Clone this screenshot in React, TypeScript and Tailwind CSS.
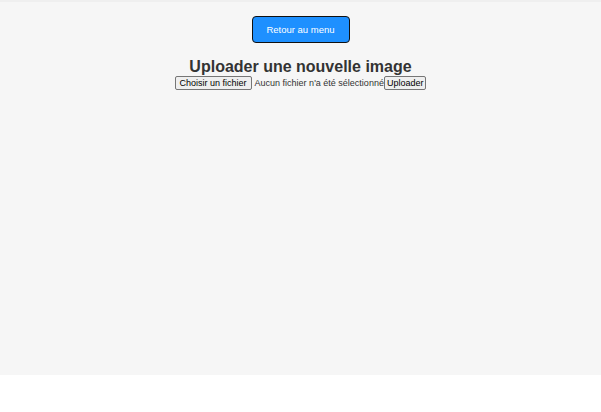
export default function App() {
  return (
    <div className="font-['Liberation_Sans',Arial,sans-serif]">
      <div className="h-[375px] bg-[#f6f6f6] border-t-2 border-[#efefef] flex flex-col items-center">
        <button className="mt-[14px] w-[98px] h-[27px] bg-[#1e90ff] border border-[#111] rounded-[4px] text-white text-[9.5px] leading-none">
          Retour au menu
        </button>
        <h2 className="mt-[15px] text-[16px] leading-[18px] font-bold text-[#333]">
          Uploader une nouvelle image
        </h2>
        <div className="flex items-center text-[9px] leading-none text-[#333]">
          <span className="h-[14px] px-[4px] flex items-center bg-[#efefef] border border-[#767676] rounded-[2px] text-black">
            Choisir un fichier
          </span>
          <span className="ml-[3px]">Aucun fichier n'a été sélectionné</span>
          <button className="h-[14px] px-[2px] flex items-center bg-[#efefef] border border-[#767676] rounded-[2px] text-black">
            Uploader
          </button>
        </div>
      </div>
    </div>
  );
}
